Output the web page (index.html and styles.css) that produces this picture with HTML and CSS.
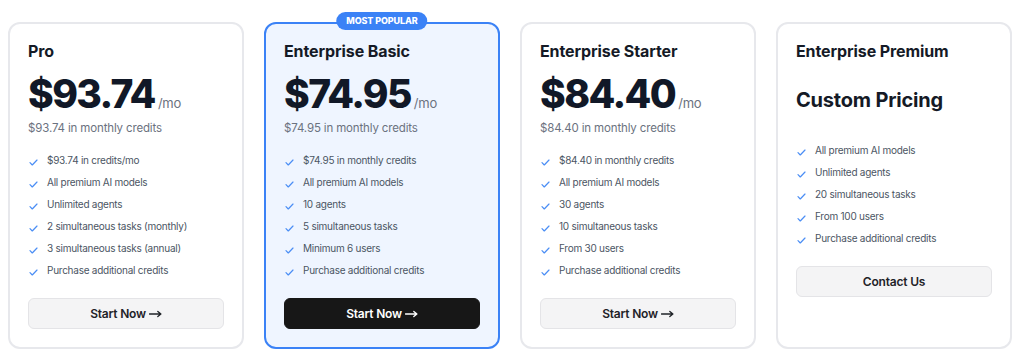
FILE: index.html
```html
<!DOCTYPE html>
<html lang="en">
<head>
<meta charset="utf-8">
<link rel="stylesheet" href="styles.css">
</head>
<body>
<div class="plans">
  <div class="card">
    <h3 class="title">Pro</h3>
    <div class="price"><span class="amount">$93.74</span><span class="per">/mo</span></div>
    <p class="sub">$93.74 in monthly credits</p>
    <ul class="features">
      <li><svg class="check" viewBox="0 0 10 8"><path d="M1 4.2 L3.6 6.8 L9 1.2"/></svg>$93.74 in credits/mo</li>
      <li><svg class="check" viewBox="0 0 10 8"><path d="M1 4.2 L3.6 6.8 L9 1.2"/></svg>All premium AI models</li>
      <li><svg class="check" viewBox="0 0 10 8"><path d="M1 4.2 L3.6 6.8 L9 1.2"/></svg>Unlimited agents</li>
      <li><svg class="check" viewBox="0 0 10 8"><path d="M1 4.2 L3.6 6.8 L9 1.2"/></svg>2 simultaneous tasks (monthly)</li>
      <li><svg class="check" viewBox="0 0 10 8"><path d="M1 4.2 L3.6 6.8 L9 1.2"/></svg>3 simultaneous tasks (annual)</li>
      <li><svg class="check" viewBox="0 0 10 8"><path d="M1 4.2 L3.6 6.8 L9 1.2"/></svg>Purchase additional credits</li>
    </ul>
    <button class="btn">Start Now<svg class="arrow" viewBox="0 0 14 8"><path d="M0.5 4 H12.5 M9.5 1.2 L12.8 4 L9.5 6.8"/></svg></button>
  </div>
  <div class="card popular">
    <span class="badge">MOST POPULAR</span>
    <h3 class="title">Enterprise Basic</h3>
    <div class="price"><span class="amount">$74.95</span><span class="per">/mo</span></div>
    <p class="sub">$74.95 in monthly credits</p>
    <ul class="features">
      <li><svg class="check" viewBox="0 0 10 8"><path d="M1 4.2 L3.6 6.8 L9 1.2"/></svg>$74.95 in monthly credits</li>
      <li><svg class="check" viewBox="0 0 10 8"><path d="M1 4.2 L3.6 6.8 L9 1.2"/></svg>All premium AI models</li>
      <li><svg class="check" viewBox="0 0 10 8"><path d="M1 4.2 L3.6 6.8 L9 1.2"/></svg>10 agents</li>
      <li><svg class="check" viewBox="0 0 10 8"><path d="M1 4.2 L3.6 6.8 L9 1.2"/></svg>5 simultaneous tasks</li>
      <li><svg class="check" viewBox="0 0 10 8"><path d="M1 4.2 L3.6 6.8 L9 1.2"/></svg>Minimum 6 users</li>
      <li><svg class="check" viewBox="0 0 10 8"><path d="M1 4.2 L3.6 6.8 L9 1.2"/></svg>Purchase additional credits</li>
    </ul>
    <button class="btn dark">Start Now<svg class="arrow" viewBox="0 0 14 8"><path d="M0.5 4 H12.5 M9.5 1.2 L12.8 4 L9.5 6.8"/></svg></button>
  </div>
  <div class="card">
    <h3 class="title">Enterprise Starter</h3>
    <div class="price"><span class="amount">$84.40</span><span class="per">/mo</span></div>
    <p class="sub">$84.40 in monthly credits</p>
    <ul class="features">
      <li><svg class="check" viewBox="0 0 10 8"><path d="M1 4.2 L3.6 6.8 L9 1.2"/></svg>$84.40 in monthly credits</li>
      <li><svg class="check" viewBox="0 0 10 8"><path d="M1 4.2 L3.6 6.8 L9 1.2"/></svg>All premium AI models</li>
      <li><svg class="check" viewBox="0 0 10 8"><path d="M1 4.2 L3.6 6.8 L9 1.2"/></svg>30 agents</li>
      <li><svg class="check" viewBox="0 0 10 8"><path d="M1 4.2 L3.6 6.8 L9 1.2"/></svg>10 simultaneous tasks</li>
      <li><svg class="check" viewBox="0 0 10 8"><path d="M1 4.2 L3.6 6.8 L9 1.2"/></svg>From 30 users</li>
      <li><svg class="check" viewBox="0 0 10 8"><path d="M1 4.2 L3.6 6.8 L9 1.2"/></svg>Purchase additional credits</li>
    </ul>
    <button class="btn">Start Now<svg class="arrow" viewBox="0 0 14 8"><path d="M0.5 4 H12.5 M9.5 1.2 L12.8 4 L9.5 6.8"/></svg></button>
  </div>
  <div class="card">
    <h3 class="title">Enterprise Premium</h3>
    <div class="custom">Custom Pricing</div>
    <ul class="features">
      <li><svg class="check" viewBox="0 0 10 8"><path d="M1 4.2 L3.6 6.8 L9 1.2"/></svg>All premium AI models</li>
      <li><svg class="check" viewBox="0 0 10 8"><path d="M1 4.2 L3.6 6.8 L9 1.2"/></svg>Unlimited agents</li>
      <li><svg class="check" viewBox="0 0 10 8"><path d="M1 4.2 L3.6 6.8 L9 1.2"/></svg>20 simultaneous tasks</li>
      <li><svg class="check" viewBox="0 0 10 8"><path d="M1 4.2 L3.6 6.8 L9 1.2"/></svg>From 100 users</li>
      <li><svg class="check" viewBox="0 0 10 8"><path d="M1 4.2 L3.6 6.8 L9 1.2"/></svg>Purchase additional credits</li>
    </ul>
    <button class="btn">Contact Us</button>
  </div>
</div>
</body>
</html>
```

FILE: styles.css
```css
* { box-sizing: border-box; }
html, body {
  margin: 0;
  padding: 0;
  background: #ffffff;
  font-family: Inter, "Noto Sans", "Liberation Sans", sans-serif;
  color: #111827;
}
.plans {
  display: grid;
  grid-template-columns: repeat(4, 1fr);
  column-gap: 20px;
  width: 1012px;
  padding: 22px 0 0 8px;
  align-items: stretch;
}
.card {
  position: relative;
  border: 2px solid #e7e8ec;
  border-radius: 12px;
  background: #ffffff;
  padding: 17px 18px 18px;
  display: flex;
  flex-direction: column;
  height: 327px;
}
.card.popular {
  border-color: #3b82f6;
  background: #eff5ff;
}
.badge {
  position: absolute;
  top: -12px;
  left: 50%;
  transform: translateX(-50%);
  background: #3b82f6;
  color: #ffffff;
  font-size: 9px;
  font-weight: 800;
  letter-spacing: -0.1px;
  line-height: 18px;
  padding: 0 10px;
  border-radius: 9px;
  white-space: nowrap;
}
.title {
  margin: 0;
  font-size: 16px;
  line-height: 20px;
  font-weight: 700;
  color: #151a26;
  letter-spacing: -0.1px;
}
.price {
  margin-top: 13px;
  display: flex;
  align-items: baseline;
  height: 40px;
}
.amount {
  font-size: 39px;
  line-height: 40px;
  font-weight: 800;
  color: #111827;
  letter-spacing: -1.6px;
}
.per {
  font-size: 13px;
  color: #6b7280;
  margin-left: 3px;
  letter-spacing: -0.2px;
}
.sub {
  margin: 6px 0 0;
  font-size: 11.5px;
  line-height: 16px;
  color: #6b7280;
  letter-spacing: -0.15px;
}
.custom {
  margin: 25px 0 0;
  font-size: 20px;
  line-height: 28px;
  font-weight: 700;
  color: #151a26;
  letter-spacing: -0.2px;
  padding-bottom: 25px;
}
.features {
  list-style: none;
  margin: 13px 0 0;
  padding: 0;
}
.custom + .features { margin-top: 0; }
.features li {
  display: flex;
  align-items: center;
  height: 22px;
  font-size: 10px;
  color: #4b5563;
  letter-spacing: -0.25px;
}
.check {
  width: 9px;
  height: 7px;
  margin: 5px 9px 0 1px;
  flex: none;
  fill: none;
  stroke: #4b8ef5;
  stroke-width: 1.4;
  stroke-linecap: round;
  stroke-linejoin: round;
}
.btn {
  margin-top: 17px;
  height: 31px;
  width: 100%;
  border: 1px solid #e4e4e7;
  border-radius: 6px;
  background: #f4f4f5;
  color: #1f2328;
  font-family: inherit;
  font-size: 12px;
  font-weight: 600;
  letter-spacing: -0.2px;
  display: flex;
  align-items: center;
  justify-content: center;
  cursor: pointer;
}
.arrow {
  width: 13px;
  height: 8px;
  margin-left: 3px;
  fill: none;
  stroke: currentColor;
  stroke-width: 1.4;
  stroke-linecap: round;
  stroke-linejoin: round;
}
.btn.dark {
  background: #171717;
  border-color: #171717;
  color: #ffffff;
}
```
